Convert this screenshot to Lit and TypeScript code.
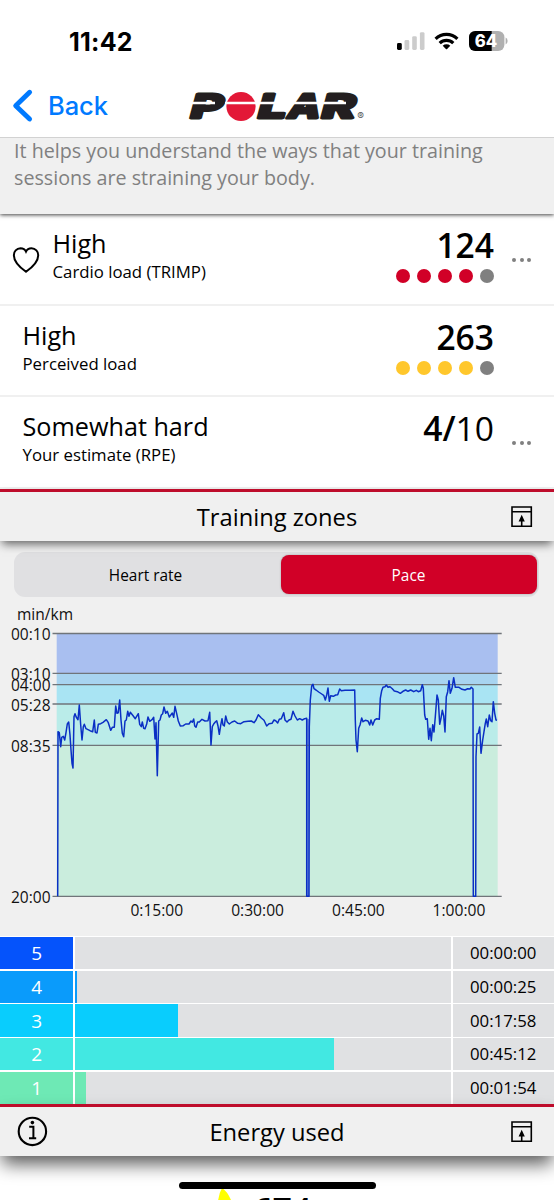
import { LitElement, html, svg, css } from "lit";
import { customElement } from "lit/decorators.js";

/* Pace samples as "x,y" pairs in thirds of a pixel, grouped by recording segment. */
const SEGMENTS: { ox: number; oy: number; pts: string }[] = [
  {
    ox: 0, oy: 620,
    pts: "173,829 174,335 178,338 182,380 185,352 190,349 194,360 198,338 202,312 206,306 210,345 213,390 216,430 219,444 222,290 225,281 229,292 234,299 238,255 242,315 246,360 250,320 253,313 258,326 264,329 270,332 278,335 283,300 286,337 291,339 295,313 302,311 309,307 319,299 325,308 332,331 337,322 343,322 347,258 351,280 355,278 359,240 363,300 367,340 371,350 375,303 379,300 383,274 387,289 391,277 398,286 406,296 415,281 419,313 424,320 427,306 431,325 435,326 440,312 444,291 449,304 456,299 461,292 465,357 468,308 472,467 476,303 480,300 484,285 488,281 492,261 497,280 502,274 508,291 513,284 517,279 521,292 525,259 530,281 535,303 541,318 550,317 557,312 567,312"
  },
  {
    ox: 190, oy: 660,
    pts: "3,183 7,187 11,177 14,198 18,202 23,186 28,186 36,178 45,183 54,182 59,157 63,255 67,200 71,192 76,186 80,182 84,198 88,223 92,196 96,176 99,195 103,198 107,168 112,186 118,192 126,186 134,183 143,190 152,191 162,185 174,184 184,183 192,188 198,180 205,164 214,174 222,181 230,198 237,191 246,190 252,180 257,182 263,189 268,178 274,176 281,158 285,180 291,186 297,180 303,178 309,154 315,168 322,180 329,176 337,180 344,176 350,175 350,709 357,709 358,200 361,120 365,78 369,73 372,86 378,90 386,96 395,102 401,106 406,120 410,105 414,84 418,124 422,107 430,109 437,105 443,104 449,87 454,92 465,91 480,91 494,90 496,180 498,240 502,275 506,205"
  },
  {
    ox: 360, oy: 660,
    pts: "0,195 5,174 9,185 16,181 24,183 29,195 33,180 38,195 44,180 50,176 58,178 61,115 65,92 69,82 75,80 79,75 84,82 90,80 97,86 103,93 112,95 121,100 129,94 137,90 144,94 152,90 161,95 169,91 175,95 182,92 187,74 190,85 194,165 197,178 202,176 206,238 210,205 214,242 218,194 222,216 226,170 231,105 235,120 239,193 243,175 247,151 251,168 255,216 259,110 263,95 267,62 271,100 276,85 281,53 286,82 297,82 306,88 315,90 323,86 330,87 334,82 339,87 340,709 347,709 348,290 351,222 355,220 359,201 363,280 368,240 372,215 376,190 379,177 383,200 388,165 392,182 396,185 400,125 404,160 408,180 411,181"
  }
];

const PACE_LINE = SEGMENTS.map((s) =>
  s.pts
    .split(" ")
    .map((p) => {
      const [x, y] = p.split(",").map(Number);
      return `${(s.ox + x / 3).toFixed(1)},${(s.oy - 600 + y / 3).toFixed(1)}`;
    })
    .join(" ")
).join(" ");

@customElement("status-bar")
class StatusBar extends LitElement {
  static styles = css`
    :host { display: flex; height: 81px; padding: 1px 46px 0 69px; justify-content: space-between; align-items: center; box-sizing: border-box; font-family: Inter, sans-serif; }
    .time { font-size: 25px; line-height: 30px; font-weight: 700; letter-spacing: 0.25px; padding-top: 1px; }
    .sys { display: block; }
    .pct { font-size: 17px; font-weight: 800; font-family: Inter, sans-serif; }
  `;
  render() {
    return html`
      <span class="time">11:42</span>
      <svg class="sys" width="112" height="24" viewBox="397 29 112 24">
        <rect x="398" y="43" width="4.8" height="7" rx="1.4" />
        <rect x="405.5" y="40" width="4.8" height="10" rx="1.4" fill="#ccc" />
        <rect x="413.2" y="36.2" width="4.6" height="13.8" rx="1.4" fill="#ccc" />
        <rect x="420.9" y="32.2" width="4.6" height="17.8" rx="1.4" fill="#ccc" />
        <g fill="none" stroke="#000" stroke-width="3.2">
          <path d="M436.6 38.8a15.6 15.6 0 0 1 21.8 0" />
          <path d="M440.7 43.2a9.8 9.8 0 0 1 13.6 0" />
        </g>
        <path d="M443.7 45.8a5.6 5.6 0 0 1 7.6 0l-3.2 3.2q-.6.5-1.2 0z" />
        <clipPath id="b"><rect x="470" y="31" width="35.4" height="20" rx="6.2" /></clipPath>
        <g clip-path="url(#b)">
          <rect x="469" y="31" width="37" height="20" fill="#b0b0b0" />
          <rect x="469" y="31" width="23.7" height="20" />
        </g>
        <path d="M506.6 37.6q2 1 2 3.4t-2 3.4z" fill="#b0b0b0" />
        <text class="pct" x="475.7" y="47" fill="#fff" textLength="22.5" lengthAdjust="spacingAndGlyphs">64</text>
      </svg>
    `;
  }
}

@customElement("nav-bar")
class NavBar extends LitElement {
  static styles = css`
    :host { display: flex; height: 57px; box-sizing: border-box; border-bottom: 1.5px solid #d2d2d2; padding: 0 0 0 12px; align-items: flex-start; font-family: Inter, sans-serif; color: #007aff; }
    .chev { display: block; margin-top: 7px; }
    .back { width: 59px; margin: 9px 0 0 14px; font-size: 25.5px; line-height: 32px; font-weight: 500; letter-spacing: -0.1px; white-space: nowrap; }
    .logo { display: block; overflow: visible; margin: 9px 0 0 80px; }
    .l { font-family: Inter, sans-serif; font-weight: 800; font-size: 33px; fill: #231f20; stroke: #231f20; stroke-width: 3px; stroke-linejoin: round; }
    .r { font-family: Inter, sans-serif; font-size: 10px; fill: #555; }
  `;
  render() {
    return html`
      <svg class="chev" width="22" height="36" viewBox="12 88 22 36">
        <path d="M29.6 92.3L15.7 105.7L29.6 119" fill="none" stroke="#007aff" stroke-width="4.9" stroke-linecap="round" stroke-linejoin="round" />
      </svg>
      <span class="back">Back</span>
      <svg class="logo" width="180" height="34" viewBox="187 90 180 34">
        <g transform="translate(0 120) skewX(-15)">
          <text class="l" x="188" y="-1.6" textLength="32" lengthAdjust="spacingAndGlyphs">P</text>
          <text class="l" x="255.5" y="-1.6" textLength="28" lengthAdjust="spacingAndGlyphs">L</text>
          <text class="l" x="285.6" y="-1.6" textLength="32" lengthAdjust="spacingAndGlyphs">A</text>
          <text class="l" x="319" y="-1.6" textLength="33.5" lengthAdjust="spacingAndGlyphs">R</text>
        </g>
        <circle cx="241" cy="106.5" r="14.6" fill="#e31837" />
        <path d="M190 103H215M225 103H318M322 103H346" stroke="#fff" stroke-width="2.3" />
        <text class="r" x="357.3" y="120">®</text>
      </svg>
    `;
  }
}

@customElement("load-row")
class LoadRow extends LitElement {
  static properties = { name: {}, label: {}, value: {}, rest: {}, dots: {}, heart: { type: Boolean }, more: { type: Boolean } };
  declare name: string;
  declare label: string;
  declare value: string;
  declare rest: string;
  declare dots: string;
  declare heart: boolean;
  declare more: boolean;
  static styles = css`
    :host { display: flex; height: 91.5px; box-sizing: border-box; border-bottom: 2.5px solid #f0f0f0; padding: 0 23px 0 12px; background: #fff; }
    .heart { display: block; width: 28px; margin: 30.5px 12.5px 0 0; height: 30px; }
    .names { flex: 1; padding-top: 12px; }
    .pad { padding-left: 10.5px; }
    .name { font-size: 25.2px; line-height: 34px; }
    .label { font-size: 16.8px; line-height: 22px; margin-top: 1px; }
    .right { display: flex; flex-direction: column; align-items: flex-end; padding-top: 9px; }
    .value { font-size: 33.6px; line-height: 44px; font-weight: 580; }
    .rest { font-weight: 400; }
    .dots { display: flex; gap: 7px; margin-top: 2px; }
    .dot { width: 14.1px; height: 14.1px; border-radius: 50%; }
    .red { background: #d10027; }
    .yellow { background: #ffc72c; }
    .off { background: #808080; }
    .more { width: 37px; display: flex; justify-content: flex-end; gap: 3.6px; padding-top: 44px; }
    .more i { width: 3.9px; height: 3.9px; border-radius: 50%; background: #808080; }
    .none i { visibility: hidden; }
  `;
  render() {
    return html`
      ${this.heart
        ? html`<svg class="heart" viewBox="0 0 28 30"><path d="M14 26.8C9.5 23.5 1.9 17.5 1.9 10.4A6.8 6.8 0 0 1 8.5 3.2C11.2 3.2 13.2 4.8 14 6.6C14.8 4.8 16.8 3.2 19.5 3.2A6.8 6.8 0 0 1 26.2 10.4C26.2 17.5 18.5 23.5 14 26.8Z" fill="none" stroke="#000" stroke-width="2" /></svg>`
        : null}
      <div class="names ${this.heart ? "" : "pad"}">
        <div class="name">${this.name}</div>
        <div class="label">${this.label}</div>
      </div>
      <div class="right">
        <div class="value">${this.value}<span class="rest">${this.rest}</span></div>
        ${this.dots
          ? html`<div class="dots">${[0, 1, 2, 3].map(() => html`<span class="dot ${this.dots}"></span>`)}<span class="dot off"></span></div>`
          : null}
      </div>
      <div class="more ${this.more ? "" : "none"}"><i></i><i></i><i></i></div>
    `;
  }
}

@customElement("section-header")
class SectionHeader extends LitElement {
  static properties = { heading: {}, info: { type: Boolean } };
  declare heading: string;
  declare info: boolean;
  static styles = css`
    :host { display: grid; grid-template-columns: 60px 1fr 60px; align-items: center; height: 52px; box-sizing: border-box; border-top: 3px solid #be0c2b; background: #f0f0f0; position: relative; }
    .title { text-align: center; font-size: 23.7px; line-height: 34px; }
    .info { display: block; margin-left: 17px; }
    .pin { display: block; justify-self: end; margin-right: 21px; }
  `;
  render() {
    return html`
      ${this.info
        ? html`<svg class="info" width="31" height="31" viewBox="0 0 31 31">
            <circle cx="15.4" cy="15.4" r="13.7" fill="none" stroke="#000" stroke-width="2.1" />
            <circle cx="15.4" cy="6.6" r="1.8" />
            <path d="M12.2 10.8h4.2v11.2M12 22.2h7.2" fill="none" stroke="#000" stroke-width="2" />
          </svg>`
        : html`<span></span>`}
      <span class="title">${this.heading}</span>
      <svg class="pin" width="23" height="23" viewBox="0 0 23 23">
        <path d="M2 2H21.3V21.3H2ZM2 6.7H21.3" fill="none" stroke="#000" stroke-width="1.6" />
        <path d="M11.7 9.7L14.8 16.4H12.5V21.4H10.9V16.4H8.6Z" />
      </svg>
    `;
  }
}

@customElement("pace-chart")
class PaceChart extends LitElement {
  static styles = css`
    :host { display: block; height: 339px; }
    .plot { display: block; }
    .t { font-family: "Open Sans", sans-serif; font-size: 16px; fill: #111; }
    .grid { stroke: #70757a; stroke-width: 1.3px; }
    .pace { fill: none; stroke: #0a2fc4; stroke-width: 1.5px; stroke-linejoin: round; }
  `;
  render() {
    const bands: [number, number, string][] = [
      [33.5, 73.4, "#a9bff0"], [73.4, 84.6, "#a8d4f0"], [84.6, 104, "#a9e4f3"], [104, 145.3, "#baece9"], [145.3, 296.3, "#caeddd"]
    ];
    const ticks: [number, string][] = [[33.5, "00:10"], [73.4, "03:10"], [84.6, "04:00"], [104, "05:28"], [145.3, "08:35"], [296.3, "20:00"]];
    const hours: [number, string][] = [[156.8, "0:15:00"], [257.6, "0:30:00"], [358.4, "0:45:00"], [459, "1:00:00"]];
    return html`<svg class="plot" width="554" height="339" viewBox="0 -3 554 339">
      <text class="t" x="17" y="19.6" textLength="56" lengthAdjust="spacingAndGlyphs">min/km</text>
      ${bands.map(([a, b, c]) => svg`<rect x="56.7" y=${a} width="441" height=${b - a} fill=${c} />`)}
      <rect x="307" y="119" width="2" height="177" fill="#6f8fe0" />
      ${ticks.map(([y, t]) => svg`<line class="grid" x1="52.5" x2="501.7" y1=${y} y2=${y} /><text class="t" x="11" y=${y + 6.8} textLength="39.5" lengthAdjust="spacingAndGlyphs">${t}</text>`)}
      <polyline class="pace" points=${PACE_LINE} />
      ${hours.map(([x, t]) => svg`<text class="t" x=${x - 26.4} y="316.4" textLength="52.8" lengthAdjust="spacingAndGlyphs">${t}</text>`)}
    </svg>`;
  }
}

@customElement("zone-table")
class ZoneTable extends LitElement {
  static styles = css`
    :host { display: flex; flex-direction: column; gap: 1.6px; background: #fff; padding-top: 1.4px; height: 168.7px; box-sizing: border-box; }
    .row { display: grid; grid-template-columns: 73.3px 1fr 101px; column-gap: 1.6px; flex: 1; }
    .z { display: flex; align-items: center; justify-content: center; color: #fff; font-size: 19px; line-height: 26px; }
    .track { background: #e0e1e3; }
    .bar { height: 100%; }
    .time { background: #e0e1e3; display: flex; align-items: center; padding-left: 17px; font-size: 16.8px; line-height: 24px; }
    .z5 { background: #0553fb; }
    .z4 { background: #0a9bfb; }
    .z3 { background: #09cdfd; }
    .z2 { background: #42e8e2; }
    .z1 { background: #6ee9b5; }
  `;
  render() {
    const rows: [number, number, string][] = [
      [5, 0, "00:00:00"], [4, 2.2, "00:00:25"], [3, 103, "00:17:58"], [2, 259, "00:45:12"], [1, 11, "00:01:54"]
    ];
    return rows.map(
      ([z, w, t]) => html`<div class="row">
        <div class="z z${z}">${z}</div>
        <div class="track"><div class="bar z${z}" style="width:${w}px"></div></div>
        <div class="time">${t}</div>
      </div>`
    );
  }
}

@customElement("app-root")
class AppRoot extends LitElement {
  static styles = css`
    :host { display: flex; flex-direction: column; position: relative; width: 554px; height: 1200px; overflow: hidden; background: #fff; color: #000; font-family: "Open Sans", sans-serif; }
    :host > * { flex: none; }
    .intro { height: 76px; background: #f0f0f0; box-sizing: border-box; padding: 0 14px; color: #808080; font-size: 19.7px; line-height: 27px; box-shadow: 0 1px 4px rgba(0, 0, 0, 0.75); z-index: 1; clip-path: inset(0 0 -10px 0); }
    .intro p { margin: -1px 0 0; width: 500px; }
    .list { height: 275px; }
    .zones { box-shadow: 0 5px 9px -2px rgba(0, 0, 0, 0.6); z-index: 1; }
    .panel { background: #f0f0f0; padding-top: 11px; }
    .seg { display: flex; margin: 0 15px 0 14px; height: 44.5px; border-radius: 11px; background: #e0e0e2; box-sizing: border-box; padding: 2.5px; font-size: 15.4px; }
    .opt { flex: 1; box-sizing: border-box; display: flex; align-items: center; justify-content: center; border-radius: 8px; padding: 1.5px 6px 0 0; }
    .on { flex: none; width: 256px; padding: 1.5px 0 0; background: #d10027; color: #fff; box-shadow: 0 0 2px rgba(0, 0, 0, 0.3); }
    .energy { box-shadow: 0 10px 18px -2px rgba(0, 0, 0, 0.65); z-index: 1; }
    .foot { display: flex; flex: 1; padding: 31px 0 0 214px; gap: 17px; font-size: 34px; font-weight: 600; line-height: 46px; }
    .drop { display: block; margin-top: -1px; }
    .home { position: absolute; left: 179px; bottom: 11.5px; width: 197px; height: 7px; border-radius: 4px; background: #000; z-index: 2; }
  `;
  render() {
    return html`
      <status-bar></status-bar>
      <nav-bar></nav-bar>
      <div class="intro"><p>It helps you understand the ways that your training sessions are straining your body.</p></div>
      <div class="list">
        <load-row name="High" label="Cardio load (TRIMP)" value="124" dots="red" heart more></load-row>
        <load-row name="High" label="Perceived load" value="263" dots="yellow"></load-row>
        <load-row name="Somewhat hard" label="Your estimate (RPE)" value="4/" rest="10" more></load-row>
      </div>
      <section-header class="zones" heading="Training zones"></section-header>
      <div class="panel">
        <div class="seg"><div class="opt">Heart rate</div><div class="opt on">Pace</div></div>
        <pace-chart></pace-chart>
      </div>
      <zone-table></zone-table>
      <section-header class="energy" heading="Energy used" info></section-header>
      <div class="foot">
        <svg class="drop" width="22" height="20" viewBox="0 0 22 20"><path d="M8 2Q13 5 17 14L4 15Q5 7 8 2Z" fill="#ffff00" /></svg>
        <span>674</span>
      </div>
      <div class="home"></div>
    `;
  }
}
